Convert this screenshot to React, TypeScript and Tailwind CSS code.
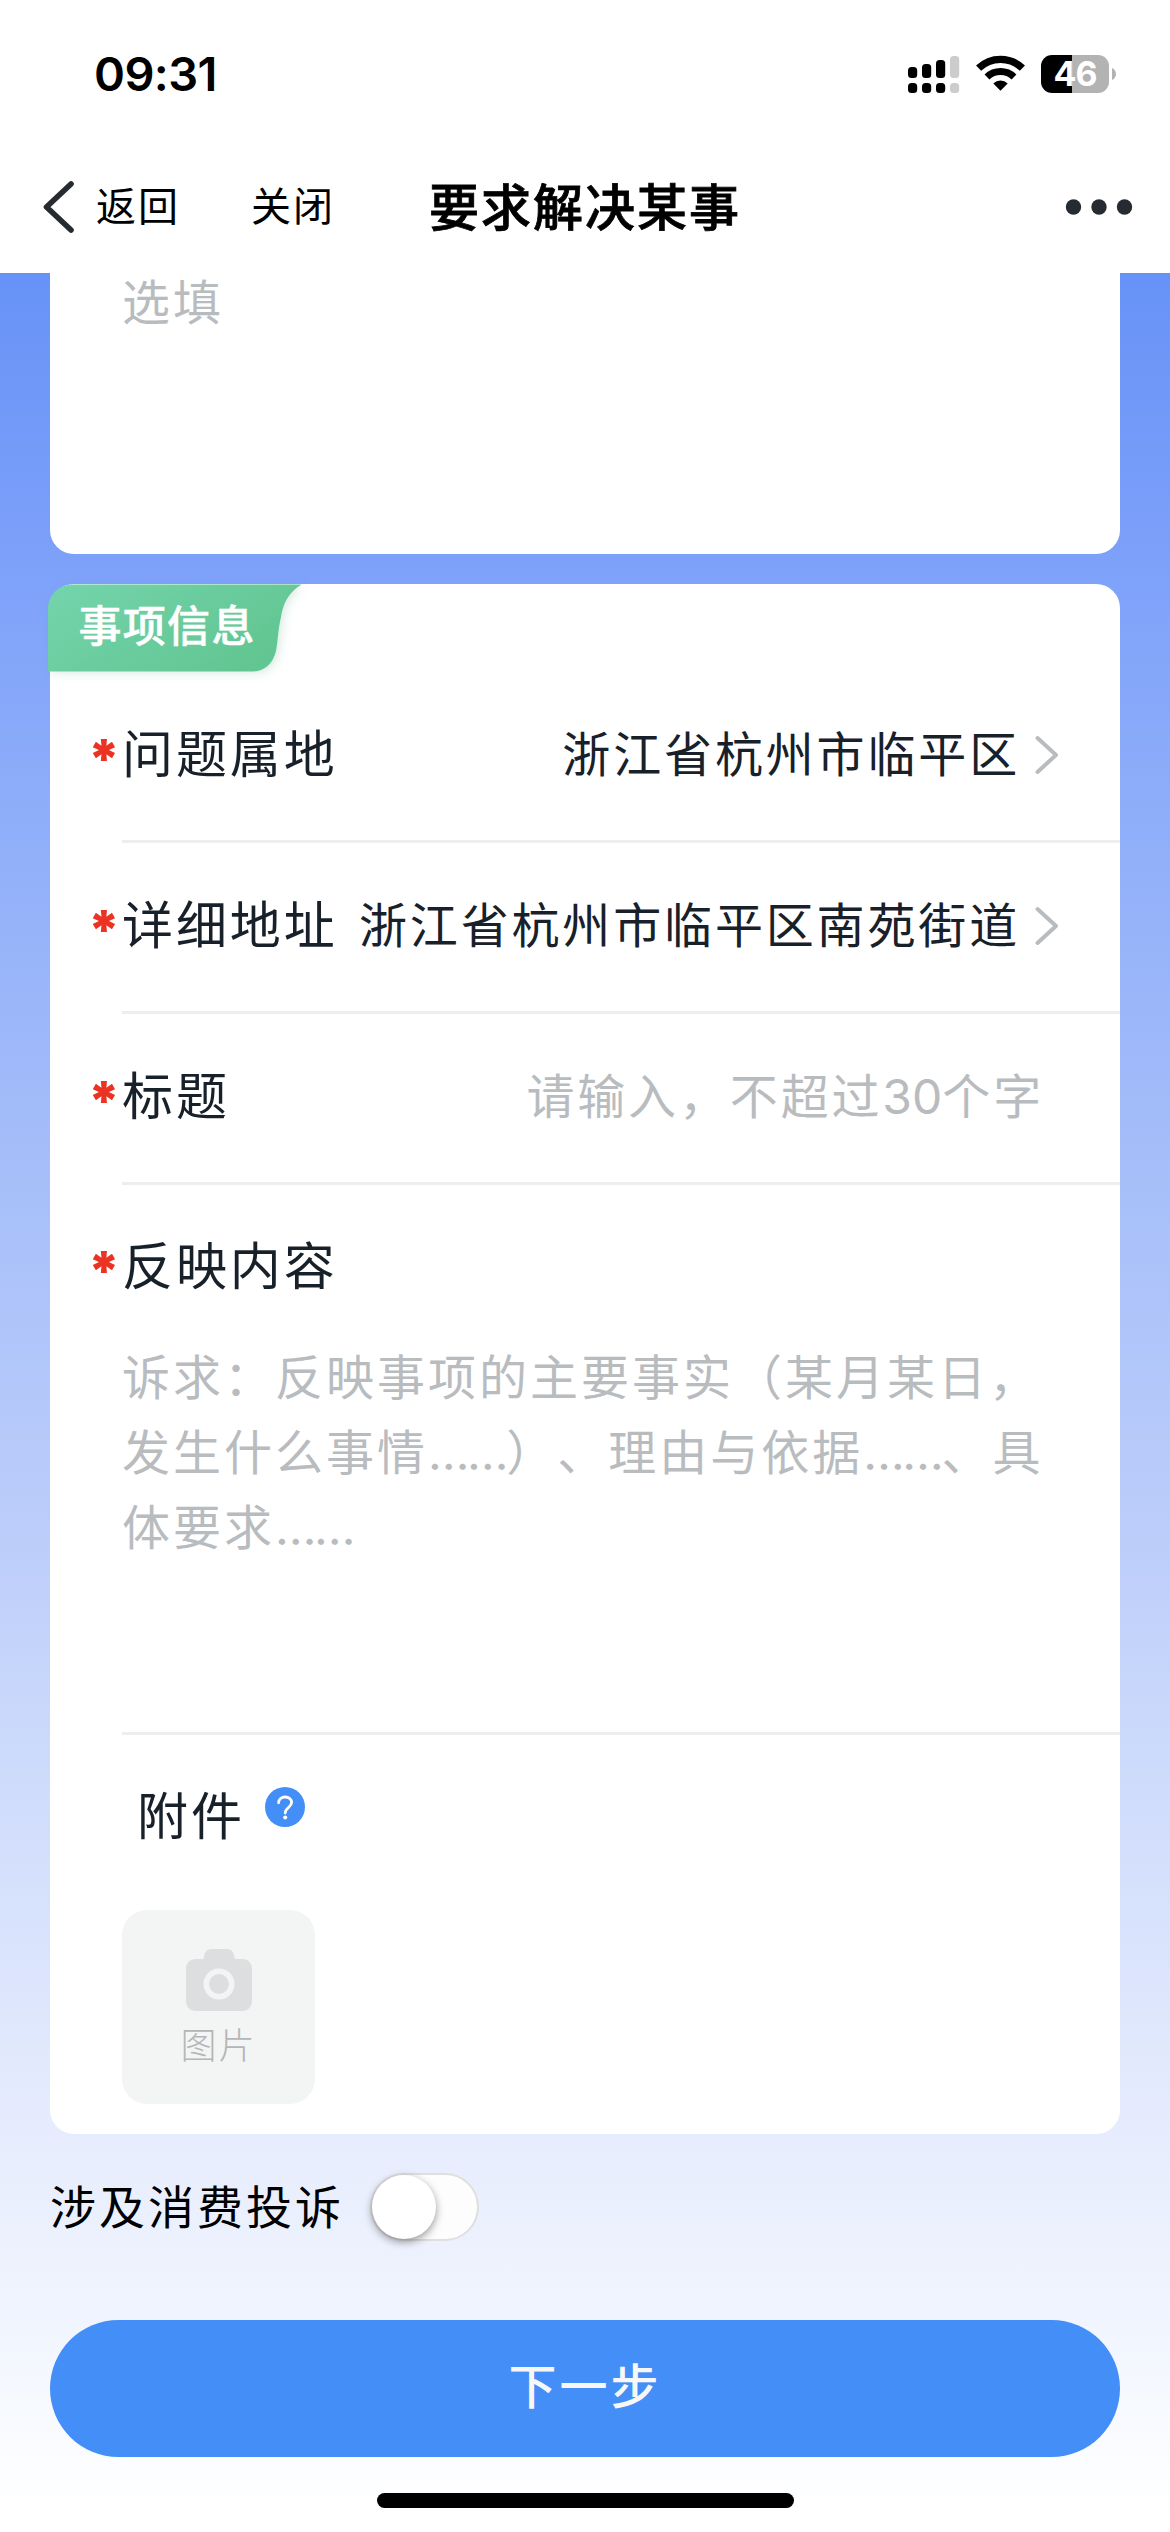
import React from "react";

function SignalIcon() {
  return (
    <svg className="h-[38px] w-[52px]" viewBox="0 0 52 38" fill="#000">
      <rect x="0" y="12" width="9.2" height="11" rx="3.5" />
      <rect x="14" y="9" width="9.2" height="14" rx="3.5" />
      <rect x="28" y="5" width="9.2" height="18" rx="3.5" />
      <rect x="42" y="1" width="9.2" height="22" rx="3.5" fill="#ccc" />
      <rect x="0" y="28" width="9.2" height="10" rx="3.5" />
      <rect x="14" y="28" width="9.2" height="10" rx="3.5" />
      <rect x="28" y="28" width="9.2" height="10" rx="3.5" />
      <rect x="42" y="28" width="9.2" height="10" rx="3.5" fill="#ccc" />
    </svg>
  );
}

function WifiIcon() {
  return (
    <svg className="h-[38px] w-[49px]" viewBox="0 0 49 38">
      <path d="M2.6 13.2 A31.5 31.5 0 0 1 46.4 13.2" fill="none" stroke="#000" strokeWidth="7.4" />
      <path d="M11 22 A19.5 19.5 0 0 1 38 22" fill="none" stroke="#000" strokeWidth="7" />
      <path d="M24.5 35.8 L17.3 28.6 A10.2 10.2 0 0 1 31.7 28.6 Z" fill="#000" />
    </svg>
  );
}

function Battery() {
  return (
    <div className="flex items-center">
      <div className="flex h-[38px] w-[68px] items-center justify-center rounded-[11px] bg-linear-to-r from-black from-[46%] to-[#b3b3b3] to-[46%]">
        <span className="text-[34px] leading-[38px] font-bold tracking-[-1px] text-white">46</span>
      </div>
      <svg className="ml-[3px] h-3 w-1" viewBox="0 0 4 12">
        <path d="M0 0 C5.3 2 5.3 10 0 12 Z" fill="#b3b3b3" />
      </svg>
    </div>
  );
}

function SectionTag({ children }: { children: React.ReactNode }) {
  return (
    <div className="relative -ml-[2px] h-[88px] w-[270px]">
      <svg className="absolute top-0 left-0 h-[100px] w-[270px] overflow-visible" viewBox="0 0 270 100">
        <defs>
          <linearGradient id="tag" x1="0" y1="0" x2="1" y2="0.5">
            <stop offset="0" stopColor="#74d4ac" />
            <stop offset="1" stopColor="#62c692" />
          </linearGradient>
          <filter id="tagShadow" x="-10%" y="-20%" width="130%" height="150%">
            <feDropShadow dx="3" dy="2" stdDeviation="4" floodColor="#3a9c6c" floodOpacity="0.18" />
          </filter>
        </defs>
        <path
          d="M0 87.5 V26 C0 10 11 0.5 26 0.5 H253.5 C240 9 235 20 233 33 C230 46 230 56 228 67 C225 80 216 87.5 204 87.5 Z"
          fill="url(#tag)"
          filter="url(#tagShadow)"
        />
      </svg>
      <span className="relative ml-[30.5px] block pt-[10px] text-[43px] leading-[64px] font-medium tracking-[1.3px] whitespace-nowrap text-white [-webkit-text-stroke:0.5px_white]">
        {children}
      </span>
    </div>
  );
}

function Label({ children }: { children: React.ReactNode }) {
  return (
    <div className="flex items-center text-[51px] leading-[60px] tracking-[2.9px] whitespace-nowrap text-[#18202a]">
      <span className="flex h-[60px] w-[30px] justify-center pr-[6px] text-[54px] leading-[68px] font-black tracking-normal text-[#eb3323]">
        *
      </span>
      {children}
    </div>
  );
}

function Chevron() {
  return (
    <svg className="ml-[15px] h-[40px] w-[24px]" viewBox="0 0 24 40">
      <path d="M2.5 3 L21 20 L2.5 37" fill="none" stroke="#b9bcbf" strokeWidth="4" strokeLinecap="round" strokeLinejoin="round" />
    </svg>
  );
}

function Divider() {
  return <div className="ml-[72px] h-[3px] bg-[#eeeeee]" />;
}

function Ellipsis() {
  return <span className="tracking-[-2.4px]">……</span>;
}

function SelectRow({ label, value }: { label: string; value: string }) {
  return (
    <>
      <div className="flex h-[168px] items-center justify-between pr-[61px] pb-[3px] pl-[42px]">
        <Label>{label}</Label>
        <div className="flex items-center text-[48px] leading-[60px] tracking-[2.85px] whitespace-nowrap text-[#18202a]">
          {value}
          <Chevron />
        </div>
      </div>
      <Divider />
    </>
  );
}

export default function App() {
  return (
    <div className="flex h-[2532px] w-[1170px] flex-col overflow-hidden bg-white font-['Inter','Noto_Sans_CJK_SC',sans-serif] text-black [text-spacing-trim:space-all]">
      <header className="h-[273px] shrink-0 bg-white">
        <div className="flex h-[148px] items-center pl-[94px]">
          <span className="text-[47px] leading-[56px] font-semibold tracking-[-0.6px]">09:31</span>
          <div className="mr-[54px] ml-auto flex items-center">
            <SignalIcon />
            <div className="ml-4 flex">
              <WifiIcon />
            </div>
            <div className="ml-4">
              <Battery />
            </div>
          </div>
        </div>
        <div className="flex h-[125px] items-center pb-[7px] pl-[42px] whitespace-nowrap">
          <svg className="h-[54px] w-[33px]" viewBox="0 0 33 54">
            <path d="M29 4 L4.5 27 L29 50" fill="none" stroke="#262b31" strokeWidth="5.6" strokeLinecap="round" strokeLinejoin="round" />
          </svg>
          <span className="ml-[21px] text-[40px] leading-[50px] tracking-[2px]">返回</span>
          <span className="ml-[71px] text-[40px] leading-[50px] tracking-[2px]">关闭</span>
          <span className="ml-[94px] pt-[2px] text-[50px] leading-[60px] font-medium tracking-[2px] [-webkit-text-stroke:0.8px_black]">
            要求解决某事
          </span>
          <svg className="mr-[37px] ml-auto h-[18px] w-[68px]" viewBox="0 0 68 18" fill="#262b31">
            <circle cx="8.5" cy="9" r="7.7" />
            <circle cx="34" cy="9" r="7.7" />
            <circle cx="59.5" cy="9" r="7.7" />
          </svg>
        </div>
      </header>

      <main className="flex flex-1 flex-col bg-[linear-gradient(180deg,#6792f7_0%,#7fa2fa_13.8%,#8faef9_24.2%,#a8c0f9_41%,#bccdfa_56%,#ccdafb_65.4%,#e6ecfd_82%,#f1f5fe_91%,#fff_99%)] px-[50px]">
        <section className="h-[281px] rounded-b-[24px] bg-white pl-[72px]">
          <p className="text-[48px] leading-[60px] tracking-[3px] text-[#b9bcbf]">选填</p>
        </section>

        <section className="mt-[30px] h-[1550px] rounded-[24px] bg-white">
          <SectionTag>事项信息</SectionTag>
          <SelectRow label="问题属地" value="浙江省杭州市临平区" />
          <SelectRow label="详细地址" value="浙江省杭州市临平区南苑街道" />
          <div className="flex h-[168px] items-center justify-between pr-[76px] pb-[3px] pl-[42px]">
            <Label>标题</Label>
            <span className="text-[48px] leading-[60px] tracking-[2.85px] whitespace-nowrap text-[#b9bcbf]">
              请输入，不超过<span className="tracking-normal">30</span>个字
            </span>
          </div>
          <Divider />
          <div className="h-[155px] pt-[52px] pl-[42px]">
            <Label>反映内容</Label>
          </div>
          <p className="h-[392px] pl-[72px] text-[48px] leading-[75px] tracking-[3px] whitespace-nowrap text-[#b9bcbf]">
            诉求：反映事项的主要事实（某月某日，
            <br />
            发生什么事情
            <Ellipsis />
            ）、理由与依据
            <Ellipsis />
            、具
            <br />
            体要求
            <Ellipsis />
          </p>
          <Divider />
          <div className="flex h-[175px] items-start pt-[52px] pl-[87px]">
            <span className="text-[51px] leading-[60px] tracking-[2.9px] text-[#18202a]">附件</span>
            <svg className="ml-[19px] h-[42px] w-[42px]" viewBox="0 0 42 42">
              <circle cx="21" cy="20" r="20" fill="#448ef7" />
              <path d="M14.6 15.8 C14.6 8.2 27.6 8 27.6 15.6 C27.6 20.4 21.2 20.6 21.2 26" fill="none" stroke="#fff" strokeWidth="2.8" strokeLinecap="round" />
              <circle cx="21.2" cy="30.6" r="2" fill="#fff" />
            </svg>
          </div>
          <div className="ml-[72px] flex h-[194px] w-[193px] flex-col items-center rounded-[25px] bg-[#f3f5f4] pt-[39px]">
            <svg className="h-[62px] w-[66px]" viewBox="0 0 66 62">
              <path
                d="M10 10 H17.5 C18.5 4 20 0 26 0 H41 C46.5 0 47.8 4 49 10 H56 C62 10 66 14 66 20 V52 C66 58 62 62 56 62 H10 C4 62 0 58 0 52 V20 C0 14 4 10 10 10 Z"
                fill="#dddee0"
              />
              <circle cx="33" cy="35" r="12.7" fill="none" stroke="#f3f5f4" strokeWidth="5.6" />
            </svg>
            <span className="mt-[10px] text-[36px] leading-[50px] font-light tracking-[2px] text-[#b3b5b8]">图片</span>
          </div>
        </section>

        <div className="flex h-[145px] shrink-0 items-center">
          <span className="text-[46px] leading-[60px] tracking-[3px] whitespace-nowrap">涉及消费投诉</span>
          <div className="ml-[26px] h-[68px] w-[109px] rounded-full border-2 border-[#dfdfdf] bg-[#fdfdfd]">
            <div className="size-[64px] rounded-full bg-white shadow-[0_3px_8px_rgba(0,0,0,0.4)]" />
          </div>
        </div>

        <button className="mt-[41px] h-[137px] shrink-0 rounded-full bg-[#448ef7] pb-[4px] text-[48px] leading-[60px] font-medium tracking-[3px] text-[#f7f7f7]">
          下一步
        </button>
        <div className="mx-auto mt-[36px] h-[15px] w-[417px] rounded-full bg-black" />
      </main>
    </div>
  );
}
